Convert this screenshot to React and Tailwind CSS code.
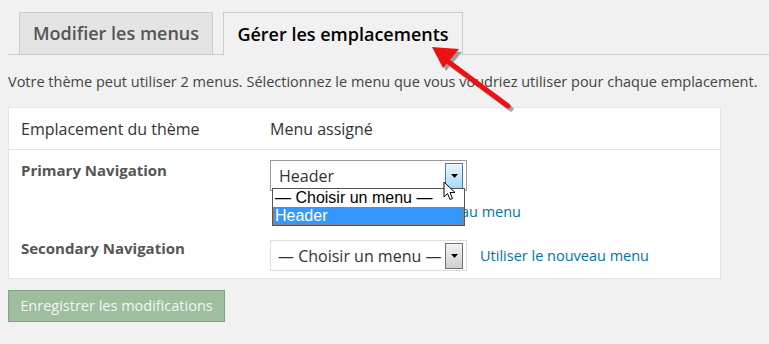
import React from 'react'

function ArrowBox({ hover }) {
  return (
    <div className={
      hover
        ? "w-[18px] h-[26px] border border-[#3c7fb1] bg-gradient-to-b from-[#eaf6fd] to-[#a7d9f5] flex items-center justify-center"
        : "w-[18px] h-[26px] border border-[#707070] bg-gradient-to-b from-[#f2f2f2] to-[#cfcfcf] flex items-center justify-center"
    }>
      <svg width="7" height="4" viewBox="0 0 7 4"><path d="M0 0h7L3.5 4z" fill="#000" /></svg>
    </div>
  )
}

function App() {
  return (
    <div className="relative w-[769px] h-[344px] overflow-hidden bg-[#f1f1f1] font-['Open_Sans',sans-serif] text-[#444]">
      {/* tabs */}
      <div className="ml-[8px] pt-[12px] pl-[11px] flex gap-[10px] border-b border-[#ccc]">
        <div className="w-[194px] h-[42px] border border-b-0 border-[#ccc] bg-[#e4e4e4] text-[#555] text-[18px] font-semibold flex items-center justify-center">
          Modifier les menus
        </div>
        <div className="w-[240px] h-[43px] -mb-px border border-b-0 border-[#ccc] bg-[#f1f1f1] text-black text-[18px] font-semibold flex items-center justify-center">
          Gérer les emplacements
        </div>
      </div>

      <p className="ml-[8px] mt-[17px] text-[14.5px] leading-[20px]">
        Votre thème peut utiliser 2 menus. Sélectionnez le menu que vous voudriez utiliser pour chaque emplacement.
      </p>

      {/* table */}
      <div className="ml-[8px] mt-[15px] w-[713px] bg-white border border-[#e5e5e5]">
        <div className="h-[42px] flex items-center border-b border-[#e1e1e1] text-[16px] text-[#333]">
          <div className="w-[261px] pl-[12px]">Emplacement du thème</div>
          <div>Menu assigné</div>
        </div>
        <div className="h-[87px] flex pt-[10px]">
          <div className="w-[261px] pl-[12px] text-[15px] leading-[20px] font-bold text-[#555]">Primary Navigation</div>
          <div className="relative">
            <div className="w-[197px] h-[31px] border border-[#999] bg-white flex items-center justify-between pl-[8px] pr-[3px] text-[16px] text-[#333]">
              <span>Header</span>
              <ArrowBox hover />
            </div>
            <a className="block ml-[82px] mt-[10px] text-[14.5px] text-[#0074a2]">Utiliser le nouveau menu</a>
          </div>
        </div>
        <div className="h-[41px] flex">
          <div className="w-[261px] pl-[12px] text-[15px] leading-[20px] font-bold text-[#555] pt-[1px]">Secondary Navigation</div>
          <div className="flex items-start gap-[13px] pt-[3px]">
            <div className="w-[197px] h-[31px] border border-[#ddd] bg-white flex items-center justify-between pl-[7px] pr-[3px] text-[16px] text-[#333]">
              <span>— Choisir un menu —</span>
              <ArrowBox />
            </div>
            <a className="mt-[5px] text-[14.5px] text-[#0074a2]">Utiliser le nouveau menu</a>
          </div>
        </div>
      </div>

      <div className="ml-[8px] mt-[11px] w-[217px] h-[32px] border border-[#7fa67f] bg-[#9fbd9f] text-[#f3f6f0] text-[14.5px] flex items-center justify-center">
        Enregistrer les modifications
      </div>

      {/* open dropdown list */}
      <div className="absolute left-[272px] top-[188px] w-[193px] border border-[#555] bg-white font-['Liberation_Sans',Arial,sans-serif] text-[16px] leading-[18px]">
        <div className="px-[2px] text-black">— Choisir un menu —</div>
        <div className="px-[2px] bg-[#3399ff] text-white outline-1 outline-dotted outline-[#c07030] -outline-offset-1">Header</div>
      </div>

      {/* cursor */}
      <svg className="absolute left-[443px] top-[181px]" width="14" height="21" viewBox="0 0 14 21">
        <path d="M1 1v15l3.5-3.5 2.5 6 2.5-1-2.5-6h5z" fill="#fff" stroke="#000" strokeWidth="1" strokeLinejoin="round" />
      </svg>

      {/* red annotation arrow */}
      <svg className="absolute left-[420px] top-[36px]" width="110" height="80" viewBox="0 0 110 80">
        <g transform="translate(3,3)" opacity="0.35">
          <line x1="88" y1="70" x2="26" y2="24" stroke="#000" strokeWidth="5" strokeLinecap="round" />
          <path d="M12 11l27 2-16 19z" fill="#000" />
        </g>
        <line x1="88" y1="70" x2="26" y2="24" stroke="#ee1111" strokeWidth="5" strokeLinecap="round" />
        <path d="M12 11l27 2-16 19z" fill="#ee1111" />
      </svg>
    </div>
  )
}

export default App
